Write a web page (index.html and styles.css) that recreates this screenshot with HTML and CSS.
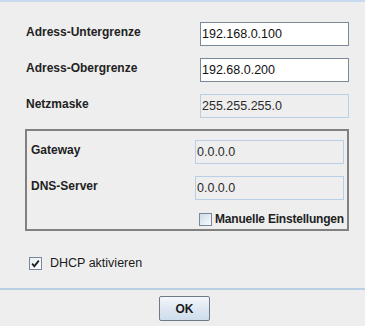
FILE: index.html
```html
<!DOCTYPE html>
<html lang="de">

<head>
    <meta charset="UTF-8">
    <meta name="viewport" content="width=device-width, initial-scale=1.0">
    <title>DHCP</title>
    <link rel="stylesheet" href="styles.css">
</head>

<body>

    <!-- top edge of the window -->
    <div class="band"></div>

    <main class="content">
        <div class="row">
            <label class="label">Adress-Untergrenze</label>
            <input class="field" type="text" value="192.168.0.100">
        </div>
        <div class="row">
            <label class="label">Adress-Obergrenze</label>
            <input class="field" type="text" value="192.68.0.200">
        </div>
        <div class="row">
            <label class="label">Netzmaske</label>
            <input class="field off" type="text" value="255.255.255.0" readonly>
        </div>

        <!-- manual settings group -->
        <div class="group">
            <div class="row">
                <label class="label">Gateway</label>
                <input class="field off" type="text" value="0.0.0.0" readonly>
            </div>
            <div class="row">
                <label class="label">DNS-Server</label>
                <input class="field off" type="text" value="0.0.0.0" readonly>
            </div>
            <div class="check manual">
                <span class="box"></span>
                <span>Manuelle Einstellungen</span>
            </div>
        </div>

        <div class="check dhcp">
            <span class="box">
                <svg width="11" height="11" viewBox="0 0 11 11">
                    <path d="M2.2 5.6 L4.3 8.2 L8.8 2.6" fill="none" stroke="#1e1e1e" stroke-width="1.8"/>
                </svg>
            </span>
            <span>DHCP aktivieren</span>
        </div>
    </main>

    <footer class="footer">
        <button class="ok">OK</button>
    </footer>

</body>

</html>
```

FILE: styles.css
```css
* {
    margin: 0;
    padding: 0;
    box-sizing: border-box;
}

html,
body {
    height: 100%;
}

body {
    background-color: #eeeeee;
    font-family: "Liberation Sans", Arial, sans-serif;
    color: #222222;
    overflow: hidden;
}

.band {
    height: 2px;
    background-color: #c6d9ef;
}

.content {
    padding: 20px 0 0 25px;
    display: flex;
    flex-direction: column;
}

.row {
    display: grid;
    grid-template-columns: 175px 149px;
    height: 24px;
    margin-bottom: 12px;
}

.label {
    padding-top: 2px;
    padding-left: 1px;
    font-size: 12px;
    font-weight: bold;
    line-height: 16px;
}

.field {
    height: 24px;
    width: 149px;
    border: 1px solid #7a8a9b;
    background-color: #ffffff;
    padding: 0 1px;
    font-family: "Liberation Sans", Arial, sans-serif;
    font-size: 12.5px;
    color: #111111;
    outline: none;
}

.field.off {
    background-color: #eeeeee;
    border-color: #b8cfe6;
    color: #2a2a2a;
}

.group {
    margin-top: -1px;
    width: 324px;
    border: 2px solid #808080;
    padding: 9px 3px 3px 4px;
}

.group .row {
    grid-template-columns: 164px 149px;
}

.group .label {
    padding-left: 0;
}

.check {
    display: flex;
    align-items: center;
    height: 14px;
    font-size: 12px;
    font-weight: bold;
    white-space: nowrap;
}

.check .box {
    flex: none;
    width: 13px;
    height: 13px;
    border: 1px solid #77889b;
    background: linear-gradient(135deg, #cfdbe8, #f7fafd);
    display: flex;
    align-items: center;
    justify-content: center;
}

.manual {
    margin-top: 1px;
    padding-left: 168px;
    gap: 3px;
    letter-spacing: -0.2px;
}

.dhcp {
    margin-top: 25px;
    padding-left: 4px;
    gap: 8px;
    font-weight: normal;
    font-size: 12.5px;
    color: #1a1a1a;
}

.dhcp .box {
    background: linear-gradient(135deg, #e6edf5, #ffffff);
}

.footer {
    margin-top: 18px;
    border-top: 2px solid #b9cfe5;
    display: flex;
    justify-content: center;
    padding: 6px 0 0 4px;
}

.ok {
    width: 51px;
    height: 25px;
    border: 1px solid #707a86;
    border-radius: 2px;
    background: linear-gradient(#f5f7fa, #dfe8f2 50%, #cddcec);
    font-family: "Liberation Sans", Arial, sans-serif;
    font-size: 12px;
    font-weight: bold;
    color: #1a1a1a;
}
```
